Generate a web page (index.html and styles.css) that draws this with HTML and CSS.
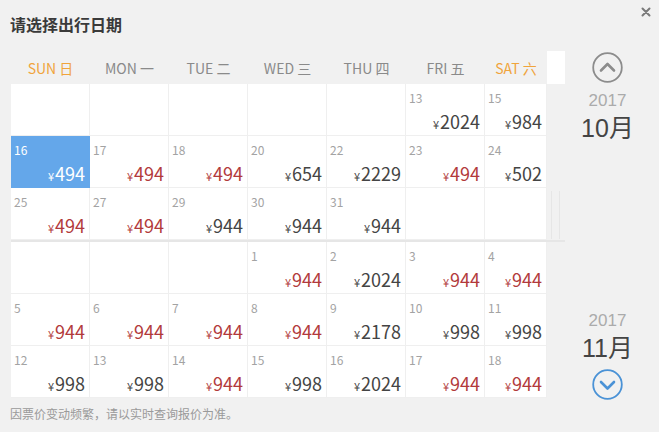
FILE: index.html
```html
<!DOCTYPE html>
<html lang="zh-CN">
<head>
<meta charset="utf-8">
<title>请选择出行日期</title>
<link rel="stylesheet" href="styles.css">
</head>
<body>
<div class="page">
  <div class="top">
    <h1 class="title">请选择出行日期</h1>
    <span class="close" aria-label="关闭"><svg width="10" height="10" viewBox="0 0 10 10"><path d="M1.5 1.5 L8.5 8.5 M8.5 1.5 L1.5 8.5" stroke="#7a7a7a" stroke-width="2" stroke-linecap="round"/></svg></span>
  </div>
  <div class="main">
    <div class="calendar">
      <div class="weekhead">
        <div class="wd weekend">SUN 日</div>
        <div class="wd">MON 一</div>
        <div class="wd">TUE 二</div>
        <div class="wd">WED 三</div>
        <div class="wd">THU 四</div>
        <div class="wd">FRI 五</div>
        <div class="wd weekend">SAT 六</div>
        <div class="track"></div>
      </div>

      <div class="month">
        <div class="days">
          <div class="cell"></div>
          <div class="cell"></div>
          <div class="cell"></div>
          <div class="cell"></div>
          <div class="cell"></div>
          <div class="cell"><span class="date">13</span><span class="price">¥<b>2024</b></span></div>
          <div class="cell"><span class="date">15</span><span class="price">¥<b>984</b></span></div>

          <div class="cell selected"><span class="date">16</span><span class="price">¥<b>494</b></span></div>
          <div class="cell"><span class="date">17</span><span class="price low">¥<b>494</b></span></div>
          <div class="cell"><span class="date">18</span><span class="price low">¥<b>494</b></span></div>
          <div class="cell"><span class="date">20</span><span class="price">¥<b>654</b></span></div>
          <div class="cell"><span class="date">22</span><span class="price">¥<b>2229</b></span></div>
          <div class="cell"><span class="date">23</span><span class="price low">¥<b>494</b></span></div>
          <div class="cell"><span class="date">24</span><span class="price">¥<b>502</b></span></div>

          <div class="cell"><span class="date">25</span><span class="price low">¥<b>494</b></span></div>
          <div class="cell"><span class="date">27</span><span class="price low">¥<b>494</b></span></div>
          <div class="cell"><span class="date">29</span><span class="price">¥<b>944</b></span></div>
          <div class="cell"><span class="date">30</span><span class="price">¥<b>944</b></span></div>
          <div class="cell"><span class="date">31</span><span class="price">¥<b>944</b></span></div>
          <div class="cell"></div>
          <div class="cell"></div>
        </div>
        <div class="track"><div class="thumb"></div></div>
      </div>

      <div class="month next">
        <div class="days">
          <div class="cell"></div>
          <div class="cell"></div>
          <div class="cell"></div>
          <div class="cell"><span class="date">1</span><span class="price low">¥<b>944</b></span></div>
          <div class="cell"><span class="date">2</span><span class="price">¥<b>2024</b></span></div>
          <div class="cell"><span class="date">3</span><span class="price low">¥<b>944</b></span></div>
          <div class="cell"><span class="date">4</span><span class="price low">¥<b>944</b></span></div>

          <div class="cell"><span class="date">5</span><span class="price low">¥<b>944</b></span></div>
          <div class="cell"><span class="date">6</span><span class="price low">¥<b>944</b></span></div>
          <div class="cell"><span class="date">7</span><span class="price low">¥<b>944</b></span></div>
          <div class="cell"><span class="date">8</span><span class="price low">¥<b>944</b></span></div>
          <div class="cell"><span class="date">9</span><span class="price">¥<b>2178</b></span></div>
          <div class="cell"><span class="date">10</span><span class="price">¥<b>998</b></span></div>
          <div class="cell"><span class="date">11</span><span class="price">¥<b>998</b></span></div>

          <div class="cell"><span class="date">12</span><span class="price">¥<b>998</b></span></div>
          <div class="cell"><span class="date">13</span><span class="price">¥<b>998</b></span></div>
          <div class="cell"><span class="date">14</span><span class="price low">¥<b>944</b></span></div>
          <div class="cell"><span class="date">15</span><span class="price">¥<b>998</b></span></div>
          <div class="cell"><span class="date">16</span><span class="price">¥<b>2024</b></span></div>
          <div class="cell"><span class="date">17</span><span class="price low">¥<b>944</b></span></div>
          <div class="cell"><span class="date">18</span><span class="price low">¥<b>944</b></span></div>
        </div>
        <div class="track"></div>
      </div>
    </div>

    <aside class="side">
      <div class="arrow up"><svg width="31" height="31" viewBox="0 0 31 31"><circle cx="15.5" cy="15.5" r="14.3" fill="none" stroke="#8c8c8c" stroke-width="1.8"/><path d="M9 18.5 L15.5 12 L22 18.5" fill="none" stroke="#8c8c8c" stroke-width="2.6" stroke-linecap="round" stroke-linejoin="round"/></svg></div>
      <div class="year first">2017</div>
      <div class="mon">10月</div>
      <div class="year second">2017</div>
      <div class="mon">11月</div>
      <div class="arrow down"><svg width="31" height="31" viewBox="0 0 31 31"><circle cx="15.5" cy="15.5" r="14.3" fill="none" stroke="#4a92d6" stroke-width="1.8"/><path d="M9 13 L15.5 19.5 L22 13" fill="none" stroke="#4a92d6" stroke-width="2.6" stroke-linecap="round" stroke-linejoin="round"/></svg></div>
    </aside>
  </div>
  <p class="note">因票价变动频繁，请以实时查询报价为准。</p>
</div>
</body>
</html>
```

FILE: styles.css
```css
* { box-sizing: border-box; }

html, body {
  margin: 0;
  padding: 0;
  background: #f1f1f1;
}

body {
  font-family: "Microsoft YaHei", "Noto Sans CJK SC", "Noto Sans", sans-serif;
  color: #444;
}

.page {
  width: 659px;
  height: 432px;
  overflow: hidden;
}

.top {
  height: 51px;
  display: flex;
  justify-content: space-between;
  align-items: flex-start;
  padding: 0 8px 0 10px;
}

.title {
  margin: 14px 0 0;
  font-size: 16px;
  line-height: 20px;
  font-weight: bold;
  color: #3a3a3a;
}

.close {
  display: block;
  margin-top: 7px;
  width: 10px;
  height: 10px;
}
.close svg { display: block; }

.main {
  display: flex;
  padding-left: 11px;
}

.calendar {
  width: 554px;
}

.weekhead {
  display: grid;
  grid-template-columns: repeat(6, 79px) 62px 18px;
  height: 33px;
}

.wd {
  display: flex;
  align-items: center;
  justify-content: center;
  font-size: 14px;
  color: #8a8a8a;
  padding-top: 1px;
}

.wd.weekend {
  color: #f0a43c;
}

.track {
  background: #fff;
  position: relative;
}

.thumb {
  position: absolute;
  left: 4px;
  top: 107px;
  width: 9px;
  height: 48px;
  border: 1px solid #e6e6e6;
  border-top: none;
  border-bottom: none;
}

.month {
  display: flex;
}

.month.next {
  border-top: 2px solid #e6e6e6;
}

.days {
  width: 536px;
  display: grid;
  grid-template-columns: repeat(6, 79px) 62px;
  grid-auto-rows: 52px;
  background: #fff;
}

.cell {
  border-right: 1px solid #efefef;
  border-bottom: 1px solid #efefef;
  background: #fff;
  display: flex;
  flex-direction: column;
  padding: 6px 4px 0 3px;
}

.date {
  font-size: 12px;
  line-height: 16px;
  color: #a3a3a3;
}

.price {
  margin-top: 4px;
  text-align: right;
  font-size: 11px;
  line-height: 22px;
  color: #444;
}

.price b {
  font-weight: normal;
  font-size: 18px;
  margin-left: 1px;
}

.price.low {
  color: #b23a3c;
}

.cell.selected {
  background: #64a7ea;
  border-color: #64a7ea;
}

.cell.selected .date,
.cell.selected .price {
  color: #fff;
}

.side {
  width: 85px;
  display: flex;
  flex-direction: column;
  align-items: center;
}

.arrow svg { display: block; }

.arrow.up { margin-top: 1px; }

.year {
  font-family: "Liberation Sans", "Noto Sans CJK SC", sans-serif;
  font-size: 17px;
  line-height: 20px;
  color: #ababab;
}

.year.first { margin-top: 8px; }
.year.second { margin-top: 168px; }

.mon {
  font-family: "Liberation Sans", "Noto Sans CJK SC", sans-serif;
  margin-top: 2px;
  font-size: 25px;
  line-height: 30px;
  color: #444;
}

.arrow.down { margin-top: 6px; }

.note {
  margin: 6px 0 0;
  padding-left: 10px;
  font-size: 12px;
  line-height: 16px;
  color: #9a9a9a;
}
```
